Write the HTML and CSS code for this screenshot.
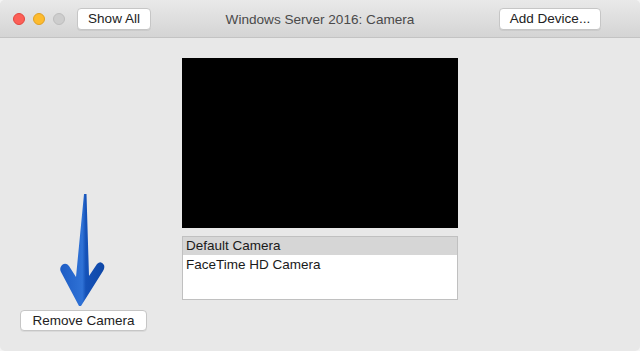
FILE: index.html
```html
<!DOCTYPE html>
<html lang="en">
<head>
    <meta charset="UTF-8">
    <meta name="viewport" content="width=device-width, initial-scale=1.0">
    <title>Windows Server 2016: Camera</title>
    <link rel="stylesheet" href="styles.css">
</head>
<body>
    <div class="window">
        <div class="toolbar">
            <div class="left">
                <div class="lights">
                    <span class="light red"></span>
                    <span class="light yellow"></span>
                    <span class="light grey"></span>
                </div>
                <button class="btn show-all">Show All</button>
            </div>
            <div class="title">Windows Server 2016: Camera</div>
            <div class="right">
                <button class="btn add">Add Device...</button>
            </div>
        </div>
        <div class="content">
            <div class="side">
                <svg class="arrow" width="50" height="116" viewBox="58 192 50 116">
                    <defs>
                        <linearGradient id="blue" x1="0" y1="0" x2="1" y2="0">
                            <stop offset="0" stop-color="#1d5cc4"/>
                            <stop offset="0.5" stop-color="#2f72d6"/>
                            <stop offset="0.58" stop-color="#1552b8"/>
                            <stop offset="1" stop-color="#0e47a6"/>
                        </linearGradient>
                    </defs>
                    <path d="M84 194 L86.5 194 L89 276 L97 264 Q101 260 104 265 Q105 268 103 271 L81 306 L79 306 L61 272 Q59 268 62 265 Q66 262 69 266 L76 277 Z" fill="url(#blue)"/>
                </svg>
                <button class="btn remove">Remove Camera</button>
            </div>
            <div class="main">
                <div class="video"></div>
                <ul class="cams">
                    <li class="selected">Default Camera</li>
                    <li>FaceTime HD Camera</li>
                </ul>
            </div>
        </div>
    </div>
</body>
</html>
```
FILE: styles.css
```css
*{
    box-sizing: border-box;
}
body{
    margin: 0;
    background: #f4f4f4;
    font-family: "Liberation Sans", Arial, sans-serif;
    font-size: 13.5px;
    color: #1a1a1a;
}
.window{
    width: 640px;
    height: 351px;
    background: #e8e8e8;
    border-radius: 5px;
    overflow: hidden;
}
.toolbar{
    display: grid;
    grid-template-columns: 1fr auto 1fr;
    align-items: center;
    height: 38px;
    background: linear-gradient(#e9e9e9, #d4d4d4);
    border-bottom: 1px solid #c3c3c3;
}
.left{
    display: flex;
    align-items: center;
    padding-left: 13px;
}
.lights{
    display: flex;
    gap: 8px;
    margin-right: 12px;
}
.light{
    width: 12px;
    height: 12px;
    border-radius: 50%;
}
.red{
    background: #fc5f57;
    border: 1px solid #e2463f;
}
.yellow{
    background: #fdbb2e;
    border: 1px solid #dfa023;
}
.grey{
    background: #cdcdcd;
    border: 1px solid #bdbdbd;
}
.title{
    color: #4a4a4a;
    font-size: 13.6px;
    padding-top: 1px;
}
.right{
    display: flex;
    justify-content: flex-end;
    padding-right: 39px;
}
.btn{
    font-family: inherit;
    font-size: 13.5px;
    color: #222;
    background: #fff;
    border: 1px solid #c6c6c6;
    border-radius: 4px;
    box-shadow: 0 1px 0 rgba(0,0,0,0.06);
    height: 22px;
    padding: 0;
}
.show-all{
    width: 74px;
}
.add{
    width: 102px;
}
.content{
    display: flex;
    height: 313px;
}
.side{
    width: 182px;
    padding: 0 0 20px 20px;
    display: flex;
    flex-direction: column;
    justify-content: flex-end;
}
.arrow{
    display: block;
    margin: 0 0 2px 38px;
}
.remove{
    width: 127px;
    height: 21px;
}
.main{
    padding-top: 20px;
    width: 276px;
}
.video{
    height: 170px;
    background: #000;
}
.cams{
    list-style: none;
    margin: 8px 0 0;
    padding: 0;
    height: 64px;
    background: #fff;
    border: 1px solid #c0c0c0;
}
.cams li{
    height: 18px;
    line-height: 18px;
    padding-left: 3px;
    margin-bottom: 1px;
}
.cams .selected{
    background: #d6d6d6;
}
```
